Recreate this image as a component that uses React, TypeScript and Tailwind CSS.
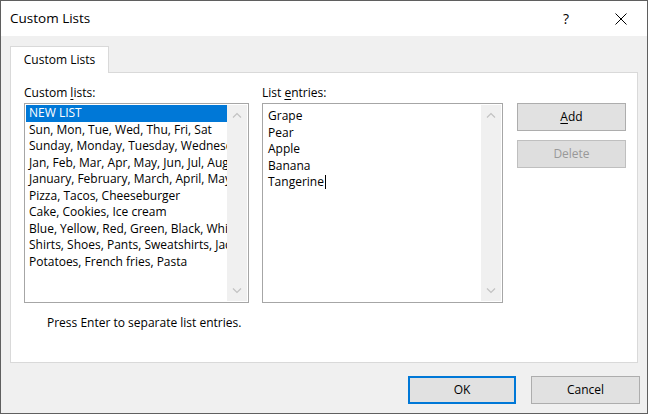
import React from 'react'

const customLists = [
  'NEW LIST',
  'Sun, Mon, Tue, Wed, Thu, Fri, Sat',
  'Sunday, Monday, Tuesday, Wednesday, Thursday, Friday, Saturday',
  'Jan, Feb, Mar, Apr, May, Jun, Jul, Aug, Sep, Oct, Nov, Dec',
  'January, February, March, April, May, June, July, August',
  'Pizza, Tacos, Cheeseburger',
  'Cake, Cookies, Ice cream',
  'Blue, Yellow, Red, Green, Black, White',
  'Shirts, Shoes, Pants, Sweatshirts, Jackets',
  'Potatoes, French fries, Pasta',
]

const entries = ['Grape', 'Pear', 'Apple', 'Banana', 'Tangerine']

function Chevron({ up }: { up?: boolean }) {
  return (
    <svg width="10" height="6" viewBox="0 0 10 6" className="block">
      <polyline
        points={up ? '1,5.5 5,1.5 9,5.5' : '1,0.5 5,4.5 9,0.5'}
        fill="none"
        stroke="#c2c2c2"
        strokeWidth="1.2"
      />
    </svg>
  )
}

function ScrollTrack() {
  return (
    <div className="flex w-[20px] shrink-0 flex-col items-center justify-between bg-[#f0f0f0] py-[7px]">
      <Chevron up />
      <Chevron />
    </div>
  )
}

function Button({
  children,
  disabled = false,
  focused = false,
}: {
  children: React.ReactNode
  disabled?: boolean
  focused?: boolean
}) {
  return (
    <div
      className={
        focused
          ? 'flex h-[28px] w-[108px] items-center justify-center border-2 border-[#0078d7] bg-[#e1e1e1] text-black'
          : disabled
            ? 'flex h-[28px] w-[109px] items-center justify-center border border-[#bfbfbf] bg-[#dedede] text-[#999999]'
            : 'flex h-[28px] w-[109px] items-center justify-center border border-[#adadad] bg-[#e1e1e1] text-black'
      }
    >
      {children}
    </div>
  )
}

export default function App() {
  return (
    <div
      className="h-[414px] w-[650px] bg-white text-[12px] text-black"
      style={{ fontFamily: '"Open Sans", "Noto Sans", sans-serif' }}
    >
      <div className="flex h-[414px] w-[648px] flex-col border border-[#5f5f5f] bg-[#f0f0f0]">
        <div className="flex h-[35px] shrink-0 items-center bg-white pl-[9px]">
          <span className="text-[13.5px]">Custom Lists</span>
          <div className="ml-auto flex items-center pr-[20px]">
            <span className="w-[20px] text-center text-[14px]">?</span>
            <svg width="12" height="12" viewBox="0 0 12 12" className="ml-[39px]">
              <path d="M0.5 0.5 L11.5 11.5 M11.5 0.5 L0.5 11.5" stroke="#000" strokeWidth="1" />
            </svg>
          </div>
        </div>

        <div className="ml-[9px] mt-[10px] flex">
          <div className="relative z-10 -mb-px flex h-[27px] w-[99px] items-center justify-center border border-b-0 border-[#d9d9d9] bg-white">
            Custom Lists
          </div>
        </div>

        <div className="ml-[9px] flex h-[291px] w-[628px] flex-col border border-[#d9d9d9] bg-white">
          <div className="flex pl-[13px] pt-[12px]">
            <div className="flex w-[225px] flex-col">
              <div className="h-[16px] leading-[16px]">
                Custom <u className="underline-offset-2">l</u>ists:
              </div>
              <div className="mt-[2px] flex h-[200px] border border-[#a6a6a6] p-px">
                <div className="min-w-0 flex-1 overflow-hidden">
                  {customLists.map((item, i) => (
                    <div
                      key={item}
                      className={
                        i === 0
                          ? 'h-[16.5px] overflow-hidden whitespace-nowrap bg-[#0078d7] pl-[3px] leading-[16.5px] text-white'
                          : 'h-[16.5px] overflow-hidden whitespace-nowrap pl-[3px] leading-[16.5px]'
                      }
                    >
                      {item}
                    </div>
                  ))}
                </div>
                <ScrollTrack />
              </div>
            </div>

            <div className="ml-[13px] flex w-[241px] flex-col">
              <div className="h-[16px] leading-[16px]">
                List <u className="underline-offset-2">e</u>ntries:
              </div>
              <div className="mt-[2px] flex h-[200px] border border-[#a6a6a6] p-px">
                <div className="min-w-0 flex-1 overflow-hidden pl-[4px] pt-[3px]">
                  {entries.map((item, i) => (
                    <div key={item} className="flex h-[16.5px] items-center whitespace-nowrap leading-[16.5px]">
                      {item}
                      {i === entries.length - 1 && <span className="ml-px inline-block h-[14px] w-px bg-black" />}
                    </div>
                  ))}
                </div>
                <ScrollTrack />
              </div>
            </div>

            <div className="ml-[14px] flex flex-col gap-[9px] pt-[18px]">
              <Button>
                <span>
                  <u className="underline-offset-2">A</u>dd
                </span>
              </Button>
              <Button disabled>Delete</Button>
            </div>
          </div>

          <div className="mt-[12px] pl-[36px] leading-[16px]">Press Enter to separate list entries.</div>
        </div>

        <div className="mr-[7px] mt-[13px] flex justify-end gap-[15px]">
          <Button focused>OK</Button>
          <Button>Cancel</Button>
        </div>
      </div>
    </div>
  )
}
